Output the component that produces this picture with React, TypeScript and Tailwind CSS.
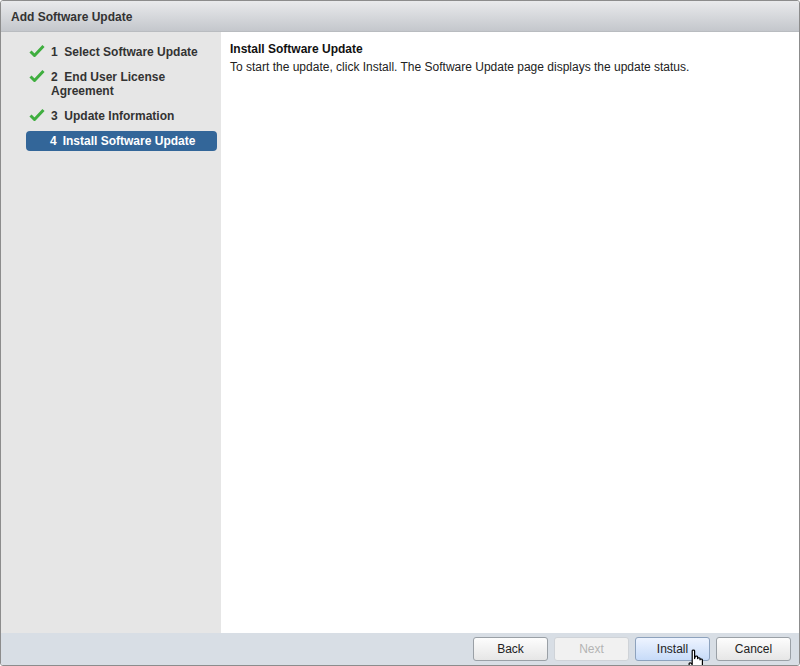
import React from 'react';

const steps = [
  { num: '1', label: 'Select Software Update', done: true },
  { num: '2', label: 'End User License Agreement', done: true },
  { num: '3', label: 'Update Information', done: true },
  { num: '4', label: 'Install Software Update', done: false, active: true },
];

const Check = () => (
  <svg width="16" height="14" viewBox="0 0 16 14" className="shrink-0">
    <path d="M1.5 7.5 L5.5 11.5 L14.5 2" fill="none" stroke="#3fae3f" strokeWidth="3" strokeLinejoin="round" />
  </svg>
);

const HandCursor = () => (
  <svg width="20" height="24" viewBox="0 0 16 20" className="absolute left-[52px] top-[12px] pointer-events-none">
    <path
      d="M4 1.5 C4 0.7 6 0.7 6 1.5 L6 8 L6.5 6.5 C6.5 5.7 8.5 5.7 8.5 6.5 L8.5 8 C8.5 7.2 10.5 7.2 10.5 8 L10.5 9 C10.5 8.2 12.5 8.2 12.5 9 L12.5 14 C12.5 16 11.5 17.5 10.5 18.5 L5 18.5 L1.5 13 C1 12 2.3 11 3 11.8 L4 13 Z"
      fill="#fff"
      stroke="#000"
      strokeWidth="1"
      strokeLinejoin="round"
    />
  </svg>
);

const Button = ({ children, variant }: { children: React.ReactNode; variant?: 'primary' | 'disabled' }) => {
  const base = 'relative w-[75px] h-[24px] rounded-[3px] border text-[12px] flex items-center justify-center';
  const styles =
    variant === 'primary'
      ? 'border-[#8da2bd] bg-gradient-to-b from-[#eef4ff] to-[#c7dbf8] text-[#222]'
      : variant === 'disabled'
      ? 'border-[#cfd3d8] bg-[#f1f1f1] text-[#b4b4b4]'
      : 'border-[#9aa0a6] bg-gradient-to-b from-[#fdfdfd] to-[#e6e6e6] text-[#222]';
  return <div className={`${base} ${styles}`}>{children}</div>;
};

export default function App() {
  return (
    <div className="w-[800px] h-[666px] bg-white font-['Liberation_Sans',Arial,sans-serif]">
      <div className="w-[800px] h-[666px] flex flex-col border border-[#8c8c8c] rounded-[3px] overflow-hidden">
        {/* Title bar */}
        <div className="h-[31px] shrink-0 flex items-center px-[10px] pt-[1px] bg-gradient-to-b from-[#e9eaec] to-[#c4c7cc] border-b border-[#b9bcc0]">
          <span className="text-[12px] font-bold text-[#333]">Add Software Update</span>
        </div>

        {/* Body */}
        <div className="flex flex-1 min-h-0">
          <div className="w-[220px] shrink-0 bg-[#e6e6e6] pt-[13px] pl-[25px] pr-[4px] flex flex-col gap-[11px]">
            {steps.map((s) =>
              s.active ? (
                <div key={s.num} className="h-[20px] -mt-[3px] rounded-[4px] bg-[#336699] flex items-center pl-[24px] text-[12px] font-bold text-white">
                  <span className="mr-[6px]">{s.num}</span>
                  <span>{s.label}</span>
                </div>
              ) : (
                <div key={s.num} className="flex items-start text-[12px] font-bold text-[#333] leading-[14px] pl-[3px]">
                  <div className="w-[22px] shrink-0 -mt-[1px]">
                    <Check />
                  </div>
                  <p>
                    {s.num}&nbsp;&nbsp;{s.label}
                  </p>
                </div>
              )
            )}
          </div>
          <div className="flex-1 bg-white pt-[10px] pl-[9px]">
            <div className="text-[12px] font-bold text-[#111] leading-[14px]">Install Software Update</div>
            <div className="text-[12px] text-[#222] leading-[14px] mt-[4px]">
              To start the update, click Install. The Software Update page displays the update status.
            </div>
          </div>
        </div>

        {/* Footer */}
        <div className="h-[32px] shrink-0 bg-[#d8dee5] flex items-center justify-end gap-[6px] pr-[8px]">
          <Button>Back</Button>
          <Button variant="disabled">Next</Button>
          <div className="relative">
            <Button variant="primary">Install</Button>
            <HandCursor />
          </div>
          <Button>Cancel</Button>
        </div>
      </div>
    </div>
  );
}
